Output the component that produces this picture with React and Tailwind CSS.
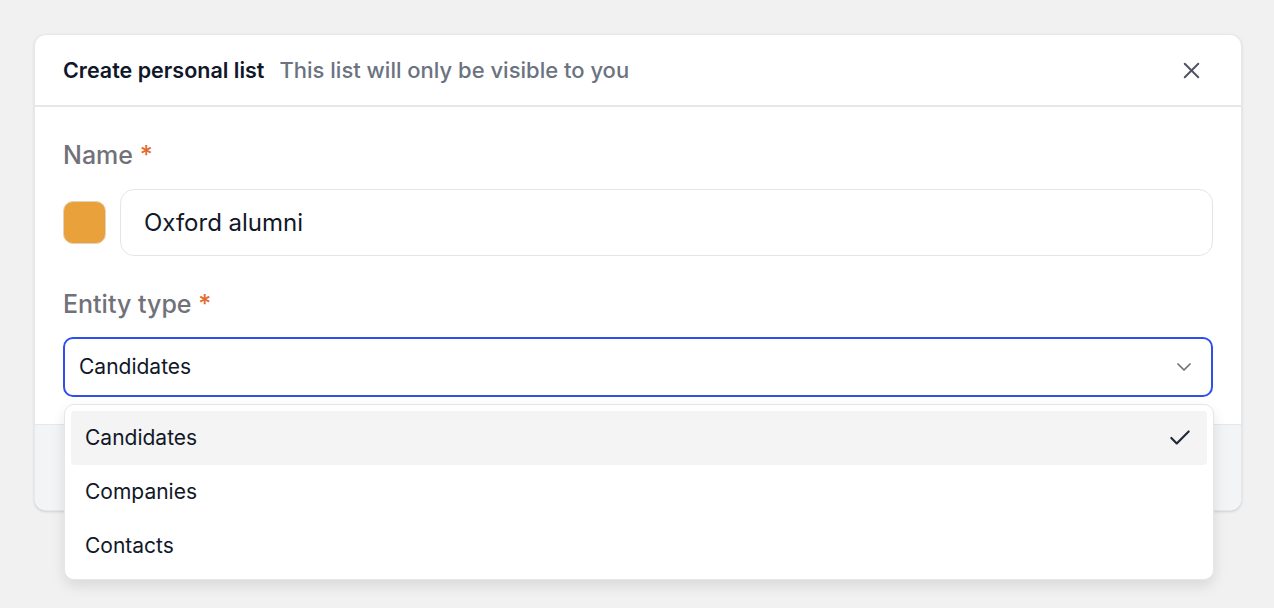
import { X, ChevronDown, Check } from "lucide-react";

export default function App() {
  const options = ["Candidates", "Companies", "Contacts"];

  return (
    <div
      className="min-h-screen w-full bg-[#f1f1f1] pt-[34px] pl-[34px] pr-[32px]"
      style={{ fontFamily: "Inter, 'Noto Sans', sans-serif" }}
    >
      {/* Modal */}
      <div className="w-[1208px] rounded-[12px] border border-[#e5e7eb] bg-white shadow-sm overflow-visible">
        {/* Header */}
        <div className="flex items-center h-[72px] px-[28px] border-b-2 border-[#e5e7eb]">
          <span className="text-[21.5px] font-semibold text-[#0f172a]">Create personal list</span>
          <span className="ml-[15px] text-[22px] font-medium text-[#6b7280]">
            This list will only be visible to you
          </span>
          <button className="ml-auto mr-[8px] text-[#4b5563]">
            <X size={27} strokeWidth={1.75} />
          </button>
        </div>

        {/* Body */}
        <div className="px-[28px] pt-[33px] pb-[27px]">
          <div className="text-[25px] font-medium text-[#71717a] leading-[30px]">
            Name <span className="text-[#e36a2e]">*</span>
          </div>
          <div className="mt-[19px] flex items-center gap-[14px]">
            <div className="w-[43px] h-[43px] rounded-[10px] bg-[#e9a23b] border border-[#e3d3bb]" />
            <div className="flex-1 h-[67px] rounded-[14px] border border-[#e2e5ea] flex items-center px-[23px]">
              <span className="text-[24px] text-[#111827]">Oxford alumni</span>
            </div>
          </div>

          <div className="mt-[33px] text-[25px] font-medium text-[#71717a] leading-[30px]">
            Entity type <span className="text-[#e36a2e]">*</span>
          </div>

          <div className="relative mt-[18px]">
            <div className="h-[60px] rounded-[10px] border-2 border-[#2e4ff0] flex items-center pl-[14px] pr-[15px]">
              <span className="text-[21px] text-[#111827]">Candidates</span>
              <ChevronDown size={24} strokeWidth={1.75} className="ml-auto text-[#6b7280]" />
            </div>

            {/* Dropdown menu */}
            <div className="absolute left-[1px] right-[-1px] top-[67px] z-10 rounded-[10px] border border-[#e3e6ea] bg-white p-[6px] shadow-[0_6px_14px_rgba(0,0,0,0.10)]">
              {options.map((o, i) => (
                <div
                  key={o}
                  className={`flex items-center h-[54px] pl-[14px] pr-[14px] rounded-[4px] ${
                    i === 0 ? "bg-[#f4f4f5]" : ""
                  }`}
                >
                  <span className="text-[21px] text-[#111827]">{o}</span>
                  {i === 0 && (
                    <Check size={26} strokeWidth={2} className="ml-auto text-[#1f2937]" />
                  )}
                </div>
              ))}
            </div>
          </div>
        </div>

        {/* Footer */}
        <div className="h-[86px] rounded-b-[12px] border-t border-[#e5e7eb] bg-[#f3f4f6]" />
      </div>
    </div>
  );
}
